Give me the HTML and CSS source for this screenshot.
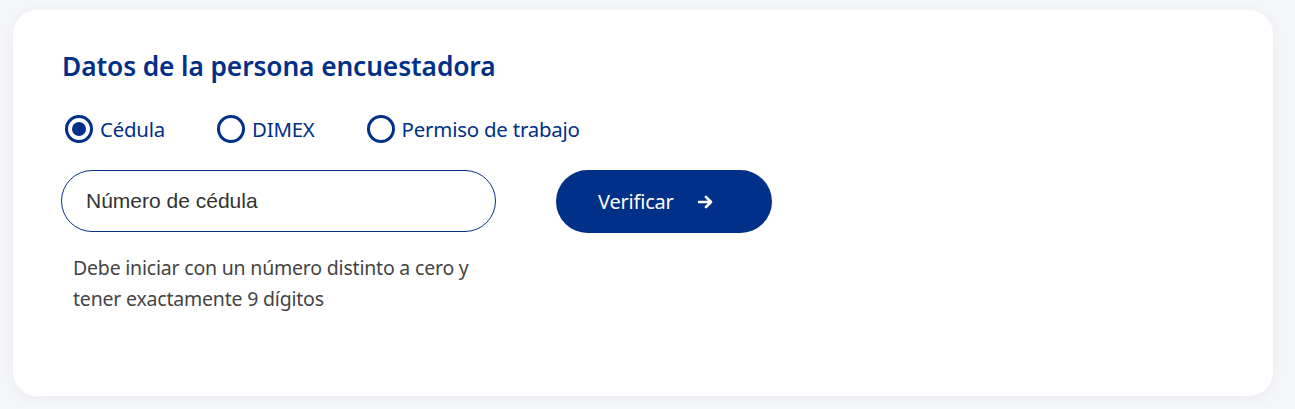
FILE: index.html
```
<!DOCTYPE html>
<html lang="es">
<head>
<meta charset="utf-8">
<title>Datos de la persona encuestadora</title>
<link rel="stylesheet" href="styles.css">
</head>
<body>
<main class="page">
  <section class="card">
    <h2 class="title">Datos de la persona encuestadora</h2>
    <div class="radios">
      <label class="radio checked"><span class="circle"></span><span class="label">Cédula</span></label>
      <label class="radio"><span class="circle"></span><span class="label">DIMEX</span></label>
      <label class="radio"><span class="circle"></span><span class="label">Permiso de trabajo</span></label>
    </div>
    <div class="row">
      <div class="field">
        <input class="input" type="text" placeholder="Número de cédula">
        <p class="help">Debe iniciar con un número distinto a cero y<br>tener exactamente 9 dígitos</p>
      </div>
      <button class="btn" type="button">Verificar
        <svg class="arrow" viewBox="0 0 16 14" width="16" height="14" aria-hidden="true"><path d="M1 7h12M8 2l5 5-5 5" fill="none" stroke="#fff" stroke-width="2.6" stroke-linecap="round" stroke-linejoin="round"/></svg>
      </button>
    </div>
  </section>
</main>
</body>
</html>
```
FILE: styles.css
```
* { box-sizing: border-box; }
html, body { margin: 0; padding: 0; }
body {
  background: #f5f6f9;
  font-family: "Noto Sans", "Open Sans", sans-serif;
  width: 1295px;
  height: 409px;
  overflow: hidden;
}
.page {
  padding: 10px 22px 13px 13px;
}
.card {
  background: #ffffff;
  border-radius: 24px;
  height: 386px;
  padding: 42px 48px 0 48px;
  box-shadow: 0 2px 12px rgba(40, 60, 110, 0.06);
}
.title {
  margin: 0;
  font-size: 26.3px;
  font-weight: 600;
  color: #003087;
  line-height: 28px;
  letter-spacing: -0.1px;
  padding-left: 1px;
}
.radios {
  display: flex;
  margin-top: 34px;
  margin-left: 4px;
  height: 30px;
  align-items: center;
}
.radio {
  display: flex;
  align-items: center;
  gap: 7px;
  margin-right: 52px;
  color: #003087;
  font-size: 20.4px;
}
.circle {
  width: 28px;
  height: 28px;
  border: 3px solid #003087;
  border-radius: 50%;
  display: flex;
  align-items: center;
  justify-content: center;
}
.radio.checked .circle::after {
  content: "";
  width: 14px;
  height: 14px;
  border-radius: 50%;
  background: #003087;
}
.label { line-height: 26px; font-weight: 400; letter-spacing: -0.2px; margin-top: -1px; }
.row {
  display: flex;
  gap: 60px;
  margin-top: 26px;
}
.field { width: 435px; }
.input {
  width: 435px;
  height: 62px;
  border: 1px solid #0a2f85;
  border-radius: 31px;
  padding: 0 24px;
  font-family: "Liberation Sans", Arial, sans-serif;
  font-size: 21px;
  color: #333;
  outline: none;
  background: #fff;
}
.input::placeholder { color: #333; opacity: 1; }
.help {
  margin: 20px 0 0 12px;
  font-size: 19.5px;
  line-height: 31px;
  color: #444;
  letter-spacing: -0.2px;
  white-space: nowrap;
}
.btn {
  width: 216px;
  height: 63px;
  border: none;
  border-radius: 32px;
  background: #003087;
  color: #fff;
  font-family: "Noto Sans", "Open Sans", sans-serif;
  font-size: 20px;
  display: flex;
  align-items: center;
  padding: 0 0 0 42px;
  gap: 24px;
  letter-spacing: -0.2px;
  cursor: pointer;
}
.arrow { display: block; }
```
